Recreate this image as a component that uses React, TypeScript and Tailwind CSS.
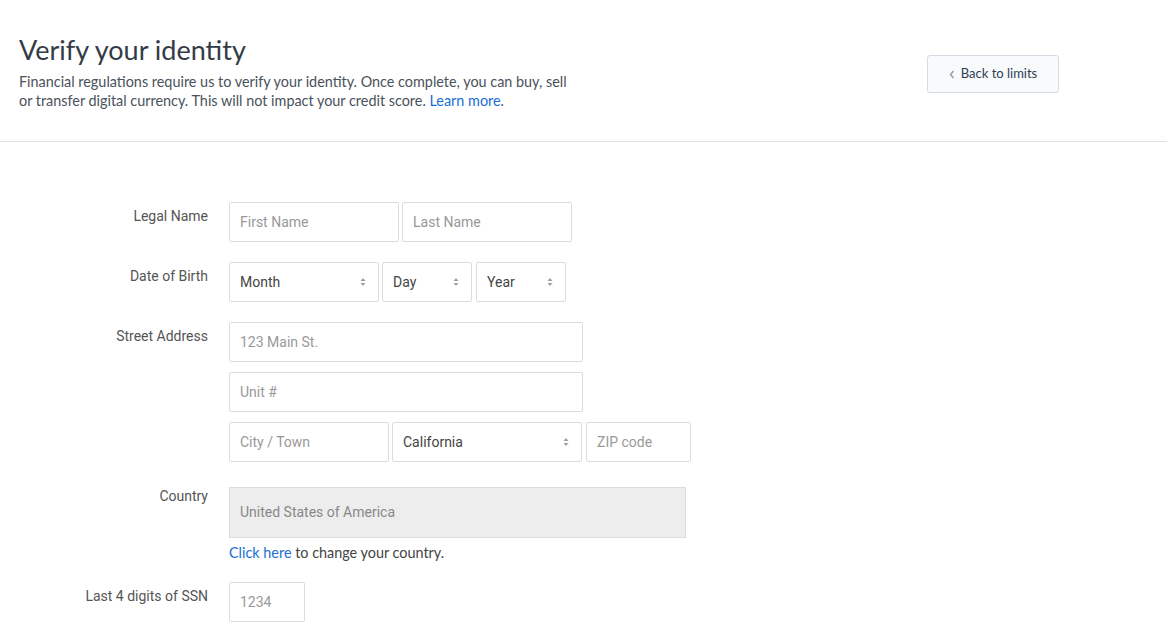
import React from 'react'

const FORM_FONT = { fontFamily: 'Roboto, "Liberation Sans", Arial, sans-serif' }

function Arrows() {
  return (
    <svg width="6" height="10" viewBox="0 0 6 10" className="shrink-0">
      <path d="M3 1 L5.5 4 H0.5 Z" fill="#9aa0a6" />
      <path d="M3 9 L5.5 6 H0.5 Z" fill="#9aa0a6" />
    </svg>
  )
}

function Input({ placeholder, w }: { placeholder: string; w: string }) {
  return (
    <div
      className={`${w} h-10 border border-[#dcdcdc] rounded-[2px] bg-white flex items-center px-[10px] text-[14px] text-[#999]`}
    >
      {placeholder}
    </div>
  )
}

function Select({ value, w }: { value: string; w: string }) {
  return (
    <div
      className={`${w} h-10 border border-[#dcdcdc] rounded-[2px] bg-white flex items-center justify-between pl-[10px] pr-[12px] text-[14px] text-[#444]`}
    >
      <span>{value}</span>
      <Arrows />
    </div>
  )
}

function Row({
  label,
  children,
  className = '',
  labelPad = 'pt-[4px]',
}: {
  label: string
  children: React.ReactNode
  className?: string
  labelPad?: string
}) {
  return (
    <div className={`flex ${className}`}>
      <div className={`w-[208px] shrink-0 text-right text-[14px] leading-[20px] text-[#555] ${labelPad}`}>{label}</div>
      <div className="ml-[21px] flex flex-col">{children}</div>
    </div>
  )
}

export default function App() {
  return (
    <div className="w-[1167px] h-[624px] bg-white overflow-hidden" style={{ fontFamily: 'Lato, "Open Sans", sans-serif' }}>
      <header className="flex justify-between border-b border-[#dfe2e6] h-[142px]">
        <div className="pl-[19px] pt-[32px]">
          <h1 className="text-[27px] leading-[36px] text-[#333c46] font-normal">Verify your identity</h1>
          <p className="mt-[4px] w-[560px] text-[14.4px] leading-[19px] text-[#4a525b]">
            Financial regulations require us to verify your identity. Once complete, you can buy, sell or transfer
            digital currency. This will not impact your credit score.{' '}
            <span className="text-[#1a6fd4]">Learn more</span>.
          </p>
        </div>
        <div className="pr-[108px] pt-[55px]">
          <button className="w-[132px] h-[38px] border border-[#d5dbe3] rounded-[3px] bg-[#f9fafb] flex items-center justify-center gap-[6px] text-[13px] text-[#2c3e55]">
            <svg width="6" height="9" viewBox="0 0 6 9">
              <path d="M4.5 1 L1.5 4.5 L4.5 8" stroke="#8a96a3" strokeWidth="1.3" fill="none" />
            </svg>
            Back to limits
          </button>
        </div>
      </header>

      <main className="pt-[60px]" style={FORM_FONT}>
        <Row label="Legal Name">
          <div className="flex gap-[3px]">
            <Input placeholder="First Name" w="w-[170px]" />
            <Input placeholder="Last Name" w="w-[170px]" />
          </div>
        </Row>
        <Row label="Date of Birth" className="mt-[20px]">
          <div className="flex gap-[3px]">
            <Select value="Month" w="w-[150px]" />
            <Select value="Day" w="w-[90px]" />
            <div className="ml-[1px]">
              <Select value="Year" w="w-[90px]" />
            </div>
          </div>
        </Row>
        <Row label="Street Address" className="mt-[20px]">
          <div className="flex flex-col gap-[10px]">
            <Input placeholder="123 Main St." w="w-[354px]" />
            <Input placeholder="Unit #" w="w-[354px]" />
            <div className="flex gap-[3px]">
              <Input placeholder="City / Town" w="w-[160px]" />
              <Select value="California" w="w-[190px]" />
              <div className="ml-[1px]">
                <Input placeholder="ZIP code" w="w-[105px]" />
              </div>
            </div>
          </div>
        </Row>
        <Row label="Country" className="mt-[25px]" labelPad="pt-0 -mt-[1px]">
          <div className="w-[457px] h-[51px] border border-[#dcdcdc] bg-[#ededed] flex items-center px-[10px] text-[14px] text-[#888]">
            United States of America
          </div>
          <div
            className="mt-[6px] text-[14.4px] leading-[17px] text-[#444]"
            style={{ fontFamily: 'Lato, "Open Sans", sans-serif' }}
          >
            <span className="text-[#1a6fd4]">Click here</span> to change your country.
          </div>
        </Row>
        <Row label="Last 4 digits of SSN" className="mt-[21px]">
          <Input placeholder="1234" w="w-[76px]" />
        </Row>
      </main>
    </div>
  )
}
